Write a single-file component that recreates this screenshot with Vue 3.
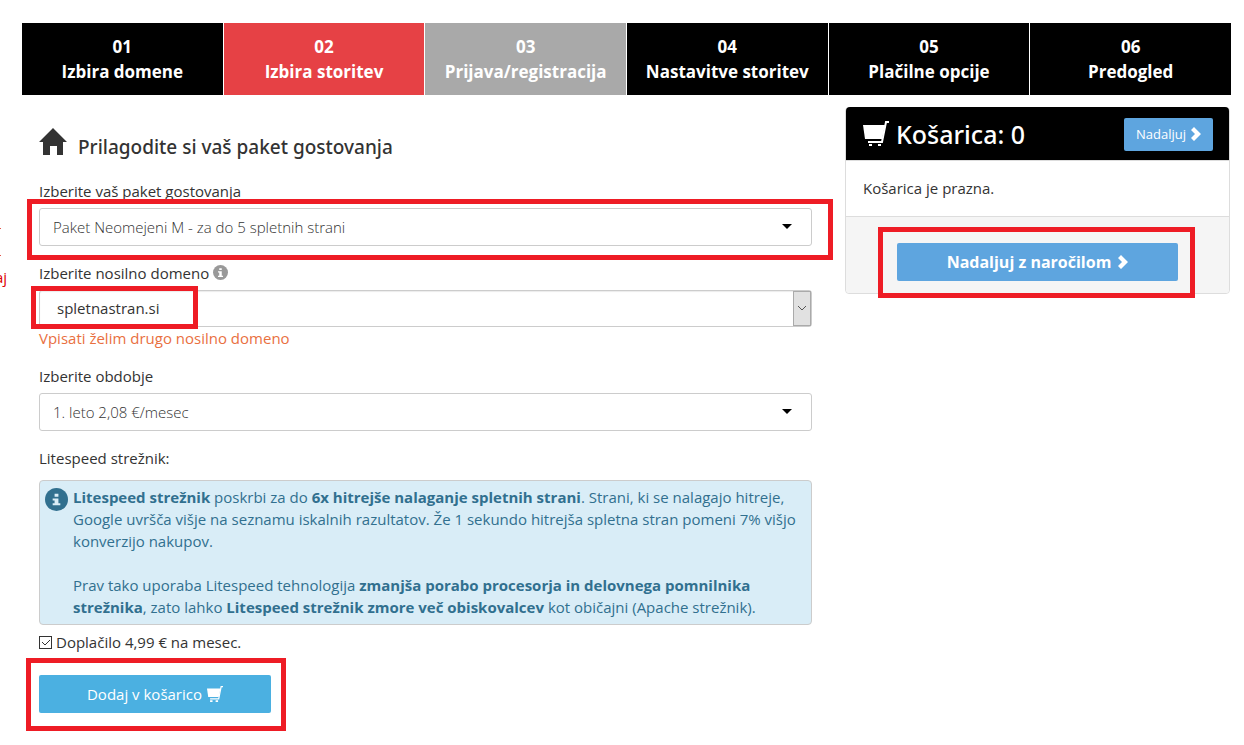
<script setup>
import { ref } from 'vue'

const steps = [
  { no: '01', name: 'Izbira domene', tone: 'dark' },
  { no: '02', name: 'Izbira storitev', tone: 'active' },
  { no: '03', name: 'Prijava/registracija', tone: 'muted' },
  { no: '04', name: 'Nastavitve storitev', tone: 'dark' },
  { no: '05', name: 'Plačilne opcije', tone: 'dark' },
  { no: '06', name: 'Predogled', tone: 'dark' }
]
const litespeed = ref(true)
</script>

<template>
  <div class="page">
    <div class="side-note"><i></i><i></i><span>aj</span></div>

    <nav class="steps">
      <a v-for="s in steps" :key="s.no" href="#" class="step" :class="s.tone">
        <span>{{ s.no }}</span>
        <span>{{ s.name }}</span>
      </a>
    </nav>

    <div class="columns">
      <form class="main" @submit.prevent>
        <h1>
          <svg class="home" viewBox="0 0 28 28" aria-hidden="true"><path d="M14 1 28 15h-4v13h-6v-9h-7v9H4V15H0Z" /></svg>
          <span>Prilagodite si vaš paket gostovanja</span>
        </h1>

        <div class="field">
          <label for="package">Izberite vaš paket gostovanja</label>
          <div class="control marked mark-package">
            <select id="package"><option>Paket Neomejeni M - za do 5 spletnih strani</option></select>
            <svg class="caret" viewBox="0 0 10 6" aria-hidden="true"><path d="M0 0h10L5 5Z" /></svg>
          </div>
        </div>

        <div class="field">
          <label for="domain">Izberite nosilno domeno
            <svg class="info" viewBox="0 0 24 24" aria-hidden="true"><circle cx="12" cy="12" r="12" /><path d="M10 5h4v3h-4zM8 10h6v7h2v2H8v-2h2v-5H8z" fill="#fff" /></svg>
          </label>
          <div class="control marked mark-domain">
            <select id="domain" class="combo"><option>spletnastran.si</option></select>
            <span class="combo-arrow"><svg viewBox="0 0 8 5" aria-hidden="true"><path d="m0 0 4 4 4-4" /></svg></span>
          </div>
          <a class="other" href="#">Vpisati želim drugo nosilno domeno</a>
        </div>

        <div class="field">
          <label for="period">Izberite obdobje</label>
          <div class="control">
            <select id="period"><option>1. leto 2,08 €/mesec</option></select>
            <svg class="caret" viewBox="0 0 10 6" aria-hidden="true"><path d="M0 0h10L5 5Z" /></svg>
          </div>
        </div>

        <div class="server">Litespeed strežnik:</div>
        <section class="notice">
          <svg class="notice-icon" viewBox="0 0 24 24" aria-hidden="true"><circle cx="12" cy="12" r="12" /><path d="M10 6h4v3h-4zM8 11h6v5h2v2H8v-2h2v-3H8z" fill="#d9edf7" /></svg>
          <div>
            <p><b>Litespeed strežnik</b> poskrbi za do <b>6x hitrejše nalaganje spletnih strani</b>. Strani, ki se nalagajo hitreje,<br>Google uvršča višje na seznamu iskalnih razultatov. Že 1 sekundo hitrejša spletna stran pomeni 7% višjo<br>konverzijo nakupov.</p>
            <p>Prav tako uporaba Litespeed tehnologija <b>zmanjša porabo procesorja in delovnega pomnilnika<br>strežnika</b>, zato lahko <b>Litespeed strežnik zmore več obiskovalcev</b> kot običajni (Apache strežnik).</p>
          </div>
        </section>

        <label class="extra">
          <span class="tick">
            <input v-model="litespeed" type="checkbox">
            <svg v-if="litespeed" viewBox="0 0 13 13" aria-hidden="true"><path d="m3 6 3 3 5-5" /></svg>
          </span>
          Doplačilo 4,99 € na mesec.
        </label>

        <div class="marked mark-add">
          <button class="add" type="submit">Dodaj v košarico
            <svg class="cart" viewBox="0 0 26 26" aria-hidden="true"><path d="M0 4h22l-3 14H2Z" /><path class="frame" d="M26 1h-3L19 21H5" /><path d="M5 23h4v3H5zM14 23h4v3h-4z" /></svg>
          </button>
        </div>
      </form>

      <aside class="basket">
        <header>
          <h2><svg class="cart" viewBox="0 0 26 26" aria-hidden="true"><path d="M0 4h22l-3 14H2Z" /><path class="frame" d="M26 1h-3L19 21H5" /><path d="M6 23h3v2H6zM15 23h3v2h-3z" /></svg>Košarica: 0</h2>
          <button class="next" type="button">Nadaljuj <svg class="chev" viewBox="0 0 10 14" aria-hidden="true"><path d="M3 0 10 7 3 14 0 11 4 7 0 3Z" /></svg></button>
        </header>
        <p>Košarica je prazna.</p>
        <footer>
          <div class="marked mark-order">
            <button class="order" type="button">Nadaljuj z naročilom <svg class="chev" viewBox="0 0 10 14" aria-hidden="true"><path d="M3 0 10 7 3 14 0 11 4 7 0 3Z" /></svg></button>
          </div>
        </footer>
      </aside>
    </div>
  </div>
</template>

<style>
body { background: #fff; }
</style>

<style scoped>
* { box-sizing: border-box; }
.page { position: relative; padding: 23px 13px 32px 22px; overflow: hidden; color: #333; font: 15px/22px "Open Sans", "Noto Sans", sans-serif; }
button, select { font: inherit; }
svg { fill: currentColor; }
.side-note { position: absolute; left: 0; top: 228px; width: 7px; overflow: hidden; display: grid; grid-template: 27px 11px 22px / 7px; color: #d00; }
.side-note i { width: 1px; height: 1px; background: #e2574c; }
.side-note span { display: flex; justify-content: flex-end; }
.steps { display: grid; grid-template-columns: repeat(6, 1fr); gap: 1px; }
.step { display: flex; flex-direction: column; align-items: center; padding: 11px 0; line-height: 25px; font-size: 17px; font-weight: 700; color: #fff; text-decoration: none; white-space: nowrap; }
.dark { background: #000; }
.active { background: #e64145; }
.muted { background: #a9a9a9; }
.columns { display: grid; grid-template-columns: minmax(0, 773fr) minmax(0, 385fr); column-gap: 33px; align-items: start; padding: 12px 1px 0 17px; }
h1, h2 { font-family: "Noto Sans", "Open Sans", sans-serif; font-weight: 500; }
h1 { display: flex; align-items: flex-start; gap: 11px; margin: 20px 0 19px; font-size: 19px; line-height: 28px; }
h1 span { padding-top: 6px; }
.home { width: 28px; height: 28px; flex: none; }
.field { margin-bottom: 16px; }
.field label { display: block; line-height: 22px; margin-bottom: 6px; }
.info { width: 15px; height: 15px; vertical-align: -1px; color: #999; }
.control, .marked { position: relative; }
select { display: block; width: 100%; height: 38px; padding: 0 13px 1px; border: 1px solid #ccc; border-radius: 3px; background: #fff; color: #333; font-weight: 300; appearance: none; }
.caret { position: absolute; right: 20px; top: 16px; width: 10px; height: 6px; color: #000; }
.combo { height: 37px; padding-left: 17px; font-weight: 400; box-shadow: inset 0 1px 1px rgba(0, 0, 0, .08); }
.combo-arrow { position: absolute; top: 1px; right: 1px; bottom: 1px; width: 18px; border: 1px solid #aaa; background: #e1e1e1; display: flex; align-items: center; justify-content: center; pointer-events: none; }
.combo-arrow svg { width: 8px; height: 5px; fill: none; stroke: #555; }
.other { display: block; color: #e9703f; text-decoration: none; }
.marked::after { content: ""; position: absolute; box-sizing: border-box; border: 5px solid #ee1c25; pointer-events: none; }
.mark-package::after { inset: -9px -21px -14px -12px; }
.mark-domain::after { left: -8px; top: -4px; width: 167px; height: 43px; }
.mark-add::after { inset: -17px -15px -18px -13px; }
.mark-order::after { inset: -16px -17px -17px -19px; }
.server { margin-bottom: 11px; }
.notice { display: flex; gap: 5px; padding: 5px 5px 6px; border: 1px solid #ccc; border-radius: 4px; background: #d9edf7; color: #31708f; }
.notice-icon { width: 23px; height: 23px; flex: none; margin-top: 2px; }
.notice p { margin: 0; white-space: nowrap; }
.notice p + p { margin-top: 22px; }
.extra { display: flex; align-items: center; gap: 4px; margin-top: 6px; }
.tick { position: relative; width: 13px; height: 13px; }
.tick input { display: block; appearance: none; width: 13px; height: 13px; margin: 0; border: 1px solid #333; background: #fff; }
.tick svg { position: absolute; inset: 0; fill: none; stroke: #333; pointer-events: none; }
.mark-add { width: 232px; margin-top: 22px; }
.add { display: flex; align-items: center; justify-content: center; gap: 5px; width: 100%; height: 38px; padding: 0; border: 0; border-radius: 2px; background: #4bb0e1; color: #fff; }
.add .cart { width: 16px; height: 16px; }
.cart .frame { fill: none; stroke: currentColor; stroke-width: 2; }
.basket { border: 1px solid #ddd; border-radius: 4px; background: #fff; }
.basket header { display: flex; justify-content: space-between; align-items: center; height: 54px; margin-top: -1px; padding: 1px 16px 0 17px; border-bottom: 1px solid #ddd; border-radius: 4px 4px 0 0; background: #000; color: #fff; }
h2 { display: flex; align-items: center; gap: 7px; margin: 0; font-size: 25px; }
h2 .cart { width: 26px; height: 26px; }
.next { display: flex; align-items: center; gap: 5px; height: 33px; padding: 0 12px; border: 0; border-radius: 2px; background: #5ea5df; color: #fff; font-size: 13px; }
.basket p { margin: 0; padding: 16px 17px 17px; }
.basket footer { padding: 26px 51px 12px; border-top: 1px solid #ddd; border-radius: 0 0 4px 4px; background: #f5f5f5; }
.order { display: flex; align-items: center; justify-content: center; gap: 7px; width: 100%; height: 38px; padding: 0; border: 0; border-radius: 2px; background: #5ea5df; color: #fff; font-size: 16px; font-weight: 700; }
.chev { width: 10px; height: 14px; }
</style>
